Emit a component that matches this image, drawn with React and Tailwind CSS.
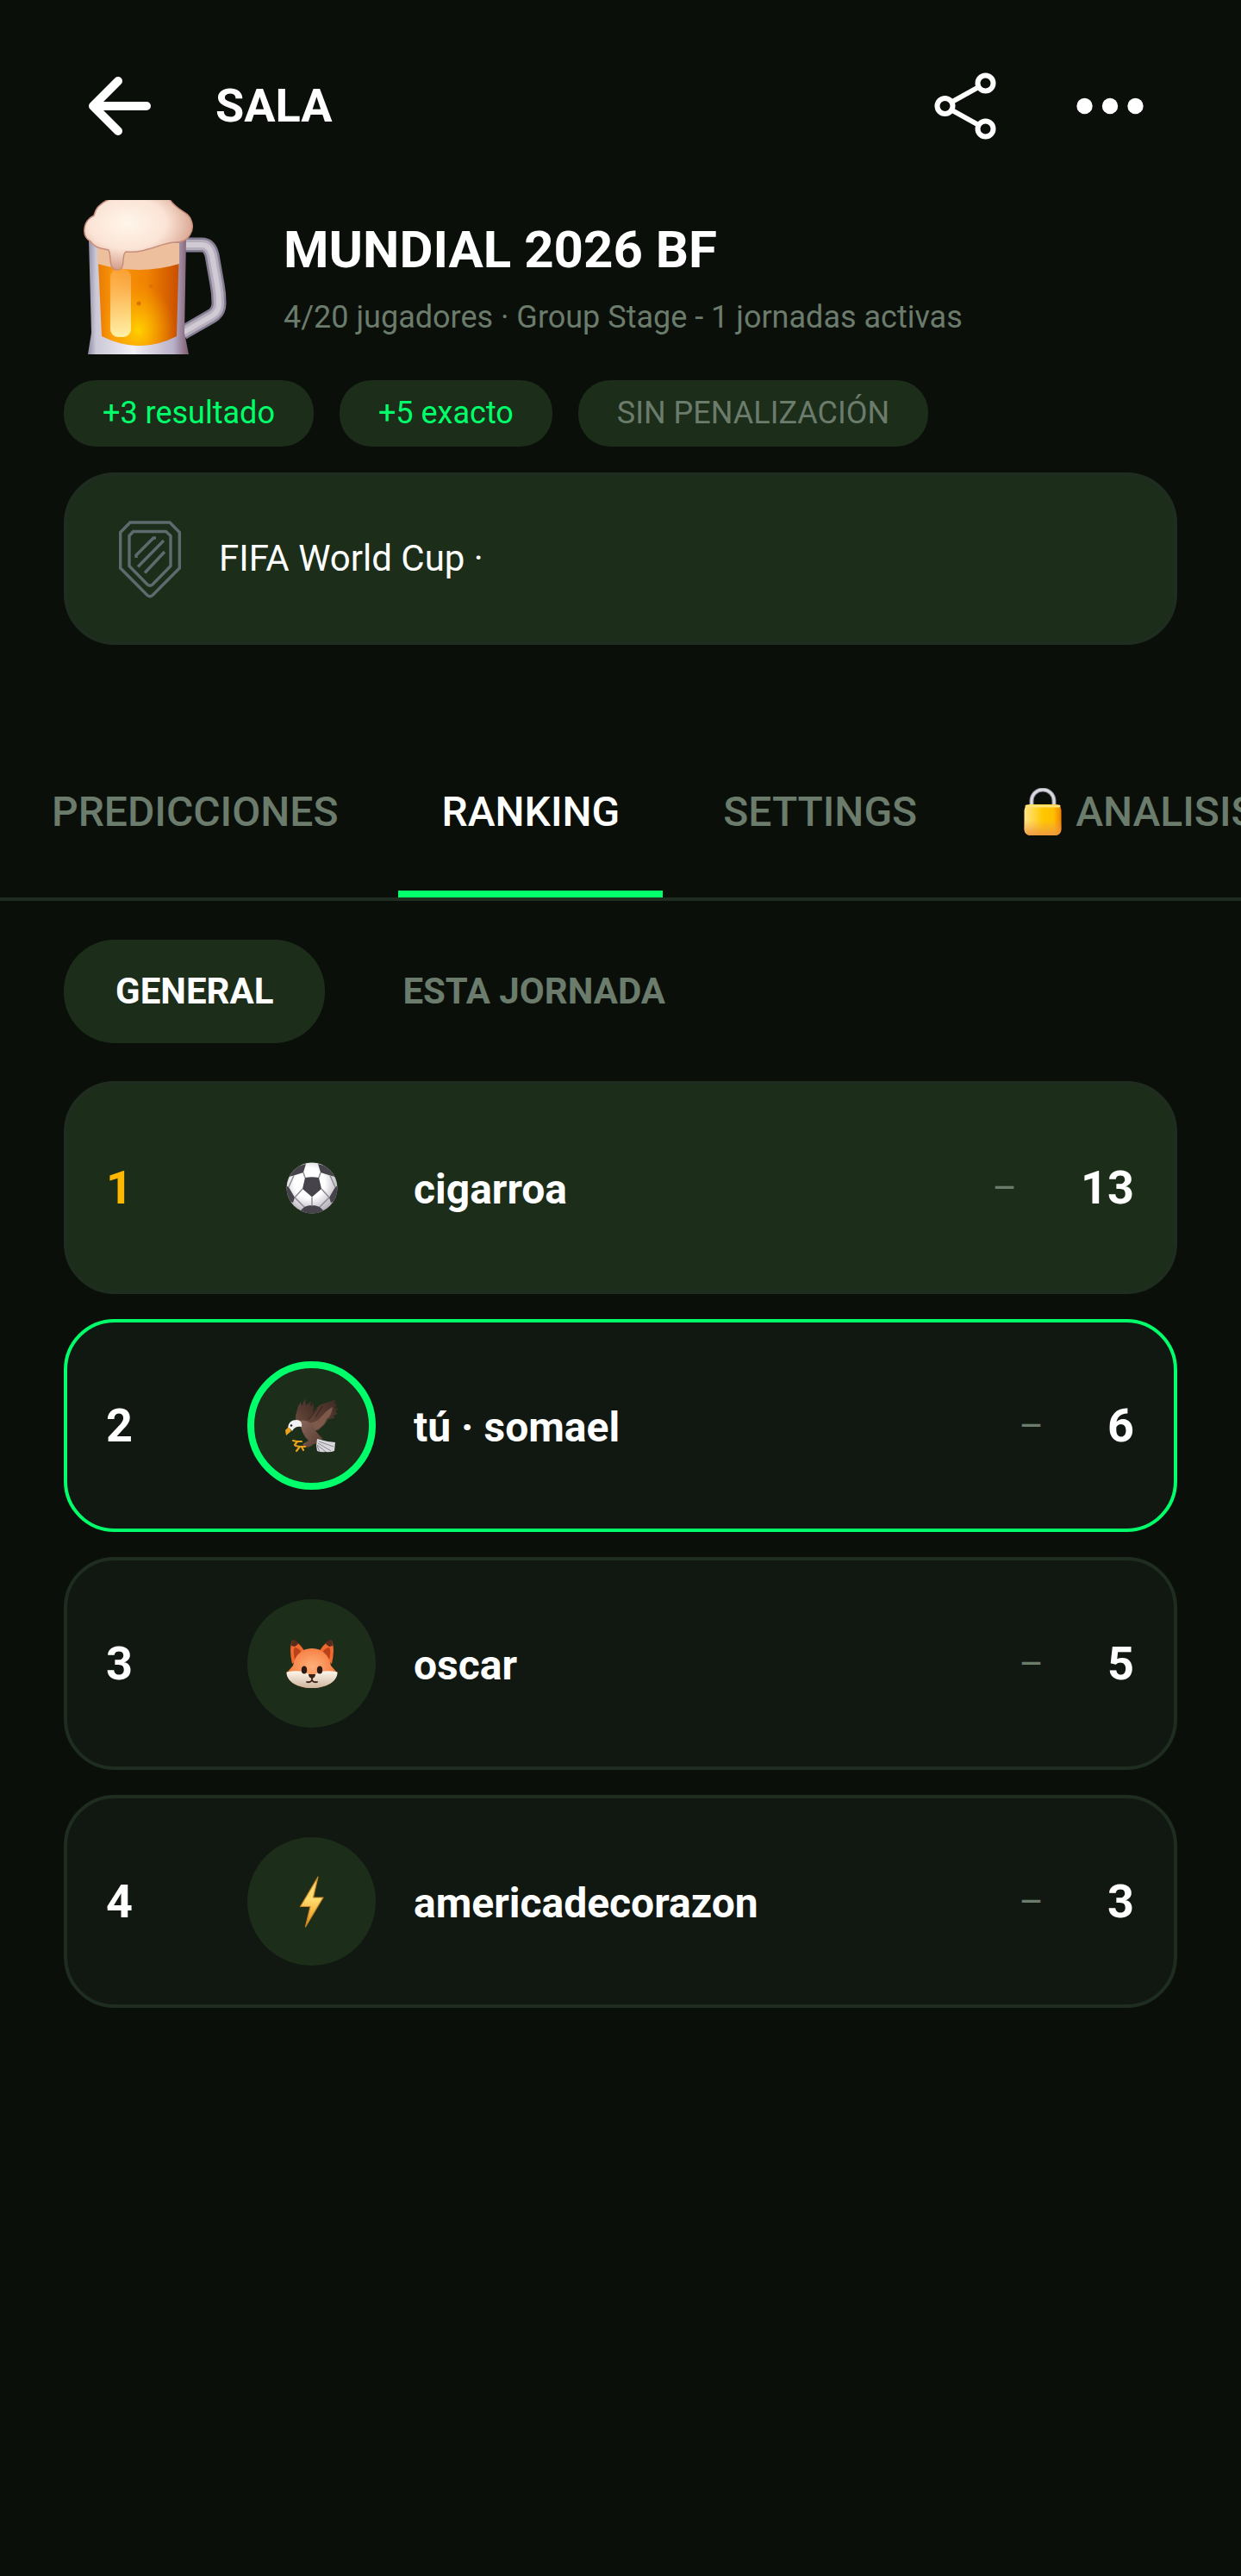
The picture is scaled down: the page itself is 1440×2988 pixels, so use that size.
import { useState } from "react";
import clsx from "clsx";

const RULES = [
  { label: "+3 resultado", active: true },
  { label: "+5 exacto", active: true },
  { label: "SIN PENALIZACIÓN", active: false },
];

const BackIcon = () => (
  <svg viewBox="0 0 72 68" className="h-[68px] w-[72px]" fill="none" aria-hidden="true">
    <path
      d="M34 5 5 34l29 29M5 34h62"
      stroke="currentColor"
      strokeWidth="10"
      strokeLinecap="round"
      strokeLinejoin="round"
    />
  </svg>
);

const ShareIcon = () => (
  <svg viewBox="0 0 72 78" className="h-[78px] w-[72px]" fill="none" aria-hidden="true">
    <g stroke="currentColor" strokeWidth="6">
      <circle cx="12.500" cy="39" r="9" />
      <circle cx="59.500" cy="12.500" r="9" />
      <circle cx="59.500" cy="65.500" r="9" />
      <path d="M20 34.500 51.500 17M20 43.500 51.500 61" />
    </g>
  </svg>
);

const MoreIcon = () => (
  <svg viewBox="0 0 78 20" className="h-5 w-[78px]" fill="currentColor" aria-hidden="true">
    <circle cx="9.500" cy="10" r="9.200" />
    <circle cx="39" cy="10" r="9.200" />
    <circle cx="68.500" cy="10" r="9.200" />
  </svg>
);

const ShieldIcon = () => (
  <svg
    viewBox="0 0 72 92"
    className="h-[92px] w-[72px] shrink-0"
    fill="none"
    stroke="#5c6b6e"
    strokeWidth="3.400"
    aria-hidden="true"
  >
    <path d="M13 4h46l11.300 11.500V57L39 88.500q-3 2.500-6 0L1.700 57V15.500z" />
    <path d="M16.500 14.500h38l5.500 5v35L39 76q-3 2.500-6 0L12 54.500v-35z" />
    <path d="M20 45v-3l20-20h3M22 55.500 52 25M30 62.500 53 38" />
  </svg>
);

const BeerIcon = () => (
  <svg viewBox="0 0 222 179" className="h-[179px] w-[222px] shrink-0" role="img" aria-label="Cerveza">
    <defs>
      <linearGradient id="beer" x1="0" y1="0" x2="1" y2="0">
        <stop offset="0" stopColor="#e87a00" />
        <stop offset=".2" stopColor="#fb960c" />
        <stop offset=".6" stopColor="#f08300" />
        <stop offset="1" stopColor="#c94e00" />
      </linearGradient>
      <radialGradient id="beerGlow" cx=".5" cy=".85" r=".45">
        <stop offset="0" stopColor="#ffd000" />
        <stop offset="1" stopColor="#ffb000" stopOpacity="0" />
      </radialGradient>
      <radialGradient id="foam" cx=".4" cy=".35" r=".65">
        <stop offset="0" stopColor="#fff6ea" />
        <stop offset=".55" stopColor="#fbe4d6" />
        <stop offset="1" stopColor="#d59d88" />
      </radialGradient>
      <linearGradient id="glass" x1="0" y1="0" x2="1" y2="0">
        <stop offset="0" stopColor="#8e8aa0" />
        <stop offset=".08" stopColor="#cbc8d8" />
        <stop offset=".45" stopColor="#f2eff5" />
        <stop offset=".85" stopColor="#b8b0c8" />
        <stop offset="1" stopColor="#7d5a6c" />
      </linearGradient>
      <linearGradient id="shine" x1="0" y1="0" x2="0" y2="1">
        <stop offset="0" stopColor="#ffc890" stopOpacity=".3" />
        <stop offset="1" stopColor="#fff0a8" />
      </linearGradient>
    </defs>
    <g fill="none" strokeLinejoin="round">
      <path
        d="M138 52h22q9 0 12 12l6 34q2 10 2 22 0 10-9 15l-33 19"
        stroke="#857d92"
        strokeWidth="17"
      />
      <path
        d="M138 52h22q9 0 12 12l6 34q2 10 2 22 0 10-9 15l-33 19"
        stroke="#b5aebd"
        strokeWidth="12"
      />
      <path
        d="M138 52h22q9 0 12 12l6 34q2 10 2 22 0 10-9 15l-33 19"
        stroke="#d0cad4"
        strokeWidth="6"
      />
    </g>
    <path d="M29 46h113l-2 108 5 25H28l4-25z" fill="url(#glass)" />
    <path d="M39 50h95l-3 108q-43 22-87 0z" fill="url(#beer)" />
    <path d="M39 50h95l-3 108q-43 22-87 0z" fill="url(#beerGlow)" />
    <path d="M39 50h95v24q-46 14-95 0z" fill="#eebf9c" />
    <rect x="54" y="80" width="24" height="79" rx="9" fill="url(#shine)" />
    <path
      d="M56-2C44 2 37 8 35 18c-13 6-15 24-4 30 5 8 13 8 21 10 4 8-1 23 10 23s4-17 10-21c24 2 40-10 56-11 18 1 24-15 20-25-4-12-16-10-26-26z"
      fill="url(#foam)"
      stroke="#c78f7b"
      strokeWidth="1.500"
    />
    <circle cx="87" cy="120" r="2.500" fill="#dd7200" />
    <circle cx="101" cy="100" r="2" fill="#dd7200" />
  </svg>
);

const LockIcon = () => (
  <svg viewBox="-4 0 48 56" className="h-14 w-12 shrink-0" aria-hidden="true">
    <defs>
      <linearGradient id="lock" x1="0" y1="0" x2="1" y2="0">
        <stop offset="0" stopColor="#ffe58a" />
        <stop offset=".5" stopColor="#ffc800" />
        <stop offset=".8" stopColor="#ffbf00" />
        <stop offset="1" stopColor="#f08000" />
      </linearGradient>
      <linearGradient id="lockShade" x1="0" y1="0" x2="0" y2="1">
        <stop offset=".5" stopColor="#f0a050" stopOpacity="0" />
        <stop offset="1" stopColor="#ee9440" stopOpacity=".9" />
      </linearGradient>
    </defs>
    <path d="M9 22V15a13 13 0 0 1 26 0v7" fill="none" stroke="#8b8992" strokeWidth="5" />
    <path d="M9 20V15a13 13 0 0 1 26 0v5" fill="none" stroke="#dcdae2" strokeWidth="3" />
    <rect x="0.500" y="19" width="43" height="36" rx="7" fill="url(#lock)" />
    <rect x="0.500" y="19" width="43" height="36" rx="7" fill="url(#lockShade)" />
    <path d="M3 21h38" stroke="#ffe27a" strokeWidth="3" strokeLinecap="round" />
  </svg>
);

const BallAvatar = () => (
  <svg viewBox="0 0 64 64" className="size-16" aria-hidden="true">
    <defs>
      <radialGradient id="ball" cx=".45" cy=".4" r=".6">
        <stop offset=".5" stopColor="#ffffff" />
        <stop offset="1" stopColor="#b4aeb9" />
      </radialGradient>
      <clipPath id="ballClip">
        <circle cx="32" cy="32" r="29.500" />
      </clipPath>
    </defs>
    <circle cx="32" cy="32" r="29.500" fill="url(#ball)" />
    <g clipPath="url(#ballClip)">
      <g fill="#46444a">
        <path d="M24 20q8-1.500 16 0l3 13-11 9.500L21 33z" />
        <path d="M8 9 25 4 22 14 11 17.500 5 19z" />
        <path d="M56 9 39 4l3 10 11 3.500 6 1.500z" />
        <path d="M0 28 5 31l7 12-2 6-8-3z" />
        <path d="M64 28l-5 3-7 12 2 6 8-3z" />
        <path d="M23 54q9-4 18 0l5 5-14 4-14-4z" />
      </g>
      <g fill="none" stroke="#8f8b94" strokeWidth="1.500">
        <path d="M24 20l-2-6M40 20l2-6M21 33l-9 10M43 33l9 10M32 42.500V53M11 17.500 5 31M53 17.500l6 13.500M12 43l11 11M52 43 41 54" />
      </g>
    </g>
  </svg>
);

const EagleAvatar = () => (
  <svg viewBox="0 0 64 64" className="size-16" aria-hidden="true">
    <defs>
      <linearGradient id="wing" x1="0" y1="1" x2="1" y2="0">
        <stop offset="0" stopColor="#6b4a3e" />
        <stop offset="1" stopColor="#3d2922" />
      </linearGradient>
      <linearGradient id="eagleBody" x1="0" y1="0" x2="1" y2="1">
        <stop offset="0" stopColor="#8a675a" />
        <stop offset="1" stopColor="#553a31" />
      </linearGradient>
    </defs>
    <path d="M13 20 16 9l3-5 1 5 4-9 1 8 6-5-1 6 4-3q1 10-5 20l-8 3-8-4z" fill="url(#wing)" />
    <path
      d="M26 28q6-10 10-15 5-7 13-8l11-4-2 5 3 1-3 4 5 1-4 3 3 3-5 2 1 3-7 1-4 6-8 7-9 1z"
      fill="url(#wing)"
    />
    <path d="M25 29q12 0 18-8 7-8 13-11-1 10-7 14-4 10-13 13z" fill="#7c5949" />
    <path d="M38 12 28 25M44 9 36 22" stroke="#35231d" strokeWidth="1" />
    <path d="M18 26q9-2 15 6 4 8 11 14-2 7-10 7-4 4-10 4l-3-4 7-4q-9-8-10-23z" fill="url(#eagleBody)" />
    <path d="M4 34q1-9 10-9 7 0 6 8-8-1-11 5-2-3-5-4z" fill="#f1f2f4" />
    <path d="M5 33 1 37l1 6 6-5z" fill="#eda21b" />
    <circle cx="8" cy="31.500" r="1.300" fill="#222222" />
    <path d="M38 47q10 3 21 4l-1 10q-5 2-10 1-6 1-10-1l-1-6z" fill="#d9d9dd" />
    <path d="M40 50l17 6M39 52l15 9M38 54l10 8M38 55l3 7" stroke="#8a8990" strokeWidth="1" />
    <path
      d="M20 50h-6l-4-1m5 1-3 4m12 2h-7l-4-1m5 1-4 5m6-5 2 4"
      fill="none"
      stroke="#eda21b"
      strokeWidth="2.200"
      strokeLinecap="round"
    />
  </svg>
);

const FoxAvatar = () => (
  <svg viewBox="0 0 64 64" className="size-16" aria-hidden="true">
    <defs>
      <radialGradient id="fox" cx=".5" cy=".45" r=".55">
        <stop offset="0" stopColor="#ffb079" />
        <stop offset="1" stopColor="#f5763a" />
      </radialGradient>
      <linearGradient id="foxCheek" x1="0" y1="0" x2="0" y2="1">
        <stop offset="0" stopColor="#fff6ec" />
        <stop offset="1" stopColor="#cdb69d" />
      </linearGradient>
    </defs>
    <path d="M9 32Q5 14 9 5q2-1 4 1 7 4 11 13zM55 32q4-18 0-27-2-1-4 1-7 4-11 13z" fill="#f06a30" />
    <path d="M12 27q-3-14 1-14 6 2 8 8zM52 27q3-14-1-14-6 2-8 8z" fill="#b9421a" />
    <path d="M8 11q0-5 2-7 5 1 6 5l-4 3zM56 11q0-5-2-7-5 1-6 5l4 3z" fill="#5a2b1c" />
    <path d="M32 14c13 0 20 9 22 20l7 8c0 11-13 18-29 18S3 53 3 42l7-8c2-11 9-20 22-20z" fill="url(#fox)" />
    <path d="M2.500 41.500q15-3 23 1l6.500 3 6.500-3q8-4 23-1C62 52 49 60 32 60S2 52 2.500 41.500z" fill="url(#foxCheek)" />
    <ellipse cx="23" cy="39" rx="3.200" ry="4.500" fill="#2c1a12" />
    <ellipse cx="41" cy="39" rx="3.200" ry="4.500" fill="#2c1a12" />
    <path d="M28 44h8q0 4-4 5-4-1-4-5z" fill="#3a2117" />
    <path d="M32 48v3m-6 2q4 1 6-2 2 3 6 2" fill="none" stroke="#3a2117" strokeWidth="1.800" strokeLinecap="round" />
  </svg>
);

const BoltAvatar = () => (
  <svg viewBox="0 0 64 64" className="size-16" aria-hidden="true">
    <defs>
      <linearGradient id="bolt" x1="0" y1="0" x2="0" y2="1">
        <stop offset="0" stopColor="#ffd873" />
        <stop offset=".45" stopColor="#ffdc6e" />
        <stop offset="1" stopColor="#e58a12" />
      </linearGradient>
    </defs>
    <path
      d="M39 3 18.500 37.500H30L24.500 61 45 27H33.500z"
      fill="url(#bolt)"
      stroke="#c98424"
      strokeWidth="1.200"
      strokeLinejoin="round"
    />
  </svg>
);

const PLAYERS = [
  { rank: 1, name: "cigarroa", points: 13, Avatar: BallAvatar },
  { rank: 2, name: "tú · somael", points: 6, Avatar: EagleAvatar, isMe: true },
  { rank: 3, name: "oscar", points: 5, Avatar: FoxAvatar },
  { rank: 4, name: "americadecorazon", points: 3, Avatar: BoltAvatar },
];

const TABS = [
  { id: "predicciones", label: "PREDICCIONES" },
  { id: "ranking", label: "RANKING" },
  { id: "settings", label: "SETTINGS" },
  { id: "analisis", label: "ANALISIS", locked: true },
];

const SCOPES = [
  { id: "general", label: "GENERAL" },
  { id: "jornada", label: "ESTA JORNADA" },
];

const PlayerRow = ({ rank, name, points, Avatar, isMe }) => (
  <li
    className={clsx(
      "flex h-[247px] items-center rounded-[59px] border-4 pr-[46px] pl-[45px]",
      isMe ? "border-[#00ff6a]" : "border-[#1f2d20]",
      rank === 1 ? "bg-[#1c2d1a]" : "bg-[#111811]"
    )}
  >
    <span
      className={clsx(
        "w-[164px] shrink-0 text-[54px] leading-16 font-bold",
        rank === 1 ? "text-[#ffb800]" : "text-white"
      )}
    >
      {rank}
    </span>
    <span
      className={clsx(
        "flex size-[149px] shrink-0 items-center justify-center rounded-full bg-[#1c2d1a]",
        isMe && "border-8 border-[#00ff6a]"
      )}
    >
      <Avatar />
    </span>
    <span className="mt-1 ml-11 min-w-0 flex-1 truncate text-[48px] leading-16 font-bold">{name}</span>
    <span className="text-[44px] leading-16 text-[#6b7b6c]">–</span>
    <span className="ml-[74px] text-[54px] leading-16 font-bold">{points}</span>
  </li>
);

const App = () => {
  const [tab, setTab] = useState("ranking");
  const [scope, setScope] = useState("general");

  return (
    <div className="min-h-screen overflow-x-hidden bg-[#0a0f0a] font-[Roboto,sans-serif] text-white">
      {/* Top bar */}
      <header className="flex h-[232px] items-start pt-[83px] pr-[113px] pl-[103px]">
        <button type="button" aria-label="Volver" className="flex h-20 items-center">
          <BackIcon />
        </button>
        <h1 className="ml-[75px] flex-1 text-[54px] leading-20 font-bold">SALA</h1>
        <button type="button" aria-label="Compartir" className="flex h-20 items-center">
          <ShareIcon />
        </button>
        <button type="button" aria-label="Más opciones" className="ml-[93px] flex h-20 items-center">
          <MoreIcon />
        </button>
      </header>

      {/* Room summary */}
      <section className="px-[74px]">
        <div className="flex items-center">
          <BeerIcon />
          <div className="ml-[33px]">
            <h2 className="text-[60px] leading-[72px] font-bold">MUNDIAL 2026 BF</h2>
            <p className="mt-5 text-[36px] leading-11 text-[#6b7b6c]">
              4/20 jugadores · Group Stage - 1 jornadas activas
            </p>
          </div>
        </div>

        <ul className="mt-[30px] flex gap-[30px]">
          {RULES.map((r) => (
            <li
              key={r.label}
              className={clsx(
                "rounded-[37px] bg-[#1c2d1a] px-[45px] py-4 text-[36px] leading-[45px]",
                r.active ? "text-[#00ff6a]" : "text-[#6b7b6c]"
              )}
            >
              {r.label}
            </li>
          ))}
        </ul>

        <div className="mt-[30px] flex h-[200px] items-center gap-11 rounded-[59px] border-4 border-[#1f2d20] bg-[#1c2d1a] px-15">
          <ShieldIcon />
          <span className="text-[42px] leading-[50px]">FIFA World Cup ·</span>
        </div>
      </section>

      {/* Tabs */}
      <nav className="mt-[104px] flex overflow-hidden border-b-4 border-[#1f2d20]">
        {TABS.map((t) => (
          <button
            key={t.id}
            type="button"
            onClick={() => setTab(t.id)}
            className={clsx(
              "relative flex h-[189px] shrink-0 items-center gap-4 px-[60px] pb-[10px] text-[48px] font-medium",
              tab === t.id ? "text-white" : "text-[#6b7b6c]"
            )}
          >
            {t.locked && <LockIcon />}
            {t.label}
            {tab === t.id && (
              <span className="absolute right-[10px] bottom-0 left-[10px] h-2 bg-[#00ff6a]" />
            )}
          </button>
        ))}
      </nav>

      {/* Ranking */}
      <main className="px-[74px] pt-[45px]">
        <div className="flex gap-[30px]">
          {SCOPES.map((s) => (
            <button
              key={s.id}
              type="button"
              onClick={() => setScope(s.id)}
              className={clsx(
                "h-[120px] rounded-[59px] px-[60px] pb-[2px] text-[42px] font-bold",
                scope === s.id ? "bg-[#1c2d1a] text-white" : "text-[#6b7b6c]"
              )}
            >
              {s.label}
            </button>
          ))}
        </div>

        <ol className="mt-11 flex flex-col gap-[29px]">
          {PLAYERS.map((p) => (
            <PlayerRow key={p.rank} {...p} />
          ))}
        </ol>
      </main>
    </div>
  );
};

export default App;
